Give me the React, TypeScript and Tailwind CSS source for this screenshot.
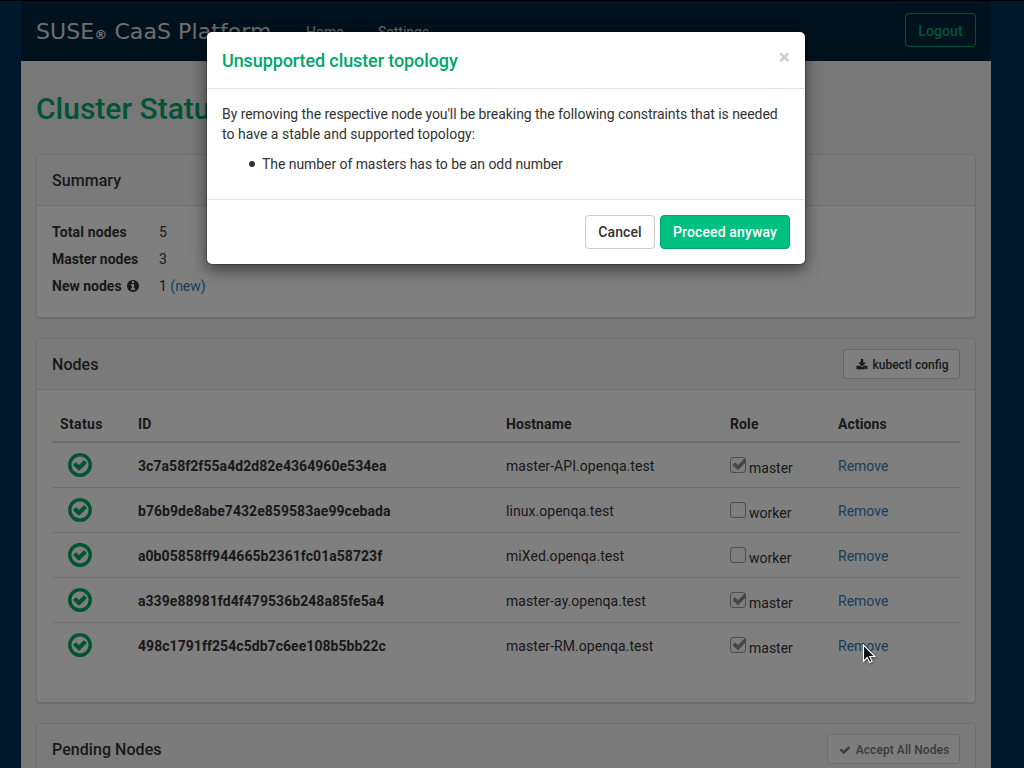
import type { ReactNode } from "react";

const CHECK_CIRCLE =
  "M1299 813l-422 422q-19 19-45 19t-45-19l-294-294q-19-19-19-45t19-45l102-102q19-19 45-19t45 19l147 147 275-275q19-19 45-19t45 19l102 102q19 19 19 45t-19 45zm141 83q0-148-73-273t-198-198-273-73-273 73-198 198-73 273 73 273 198 198 273 73 273-73 198-198 73-273zm224 0q0 209-103 385.5t-279.5 279.5-385.5 103-385.5-103-279.5-279.5-103-385.5 103-385.5 279.5-279.5 385.5-103 385.5 103 279.5 279.5 103 385.5z";
const INFO_CIRCLE =
  "M1152 1376v-160q0-14-9-23t-23-9h-96v-512q0-14-9-23t-23-9h-320q-14 0-23 9t-9 23v160q0 14 9 23t23 9h96v320h-96q-14 0-23 9t-9 23v160q0 14 9 23t23 9h448q14 0 23-9t9-23zm-128-896v-160q0-14-9-23t-23-9h-192q-14 0-23 9t-9 23v160q0 14 9 23t23 9h192q14 0 23-9t9-23zm640 416q0 209-103 385.5t-279.5 279.5-385.5 103-385.5-103-279.5-279.5-103-385.5 103-385.5 279.5-279.5 385.5-103 385.5 103 279.5 279.5 103 385.5z";
const DOWNLOAD =
  "M1344 1344q0-26-19-45t-45-19-45 19-19 45 19 45 45 19 45-19 19-45zm256 0q0-26-19-45t-45-19-45 19-19 45 19 45 45 19 45-19 19-45zm128-224v320q0 40-28 68t-68 28h-1472q-40 0-68-28t-28-68v-320q0-40 28-68t68-28h465l135 136q58 56 136 56t136-56l136-136h464q40 0 68 28t28 68zm-325-569q17 41-14 70l-448 448q-18 19-45 19t-45-19l-448-448q-31-29-14-70 17-39 59-39h256v-448q0-26 19-45t45-19h256q26 0 45 19t19 45v448h256q42 0 59 39z";
const CHECK =
  "M1671 566q0 40-28 68l-724 724-136 136q-28 28-68 28t-68-28l-136-136-362-362q-28-28-28-68t28-68l136-136q28-28 68-28t68 28l294 295 656-657q28-28 68-28t68 28l136 136q28 28 28 68z";

function Icon({ d, className }: { d: string; className: string }) {
  return (
    <svg viewBox="0 0 1792 1792" fill="currentColor" className={`shrink-0 ${className}`}>
      <path d={d} />
    </svg>
  );
}

const nodes = [
  { id: "3c7a58f2f55a4d2d82e4364960e534ea", host: "master-API.openqa.test", master: true },
  { id: "b76b9de8abe7432e859583ae99cebada", host: "linux.openqa.test", master: false },
  { id: "a0b05858ff944665b2361fc01a58723f", host: "miXed.openqa.test", master: false },
  { id: "a339e88981fd4f479536b248a85fe5a4", host: "master-ay.openqa.test", master: true },
  { id: "498c1791ff254c5db7c6ee108b5bb22c", host: "master-RM.openqa.test", master: true },
];

function Panel({ title, action, children }: { title: string; action?: ReactNode; children?: ReactNode }) {
  return (
    <section className="mb-5 rounded border border-[#ddd] bg-white shadow-[0_1px_1px_rgba(0,0,0,0.1)]">
      <header className="flex h-[51px] items-center justify-between rounded-t-[3px] border-b border-[#ddd] bg-[#f5f5f5] px-[15px]">
        <h2 className="pt-0.5 text-base font-medium tracking-[0.05px]">{title}</h2>
        {action}
      </header>
      {children}
    </section>
  );
}

function RoleBox({ checked }: { checked: boolean }) {
  return (
    <span className="mt-[-2px] flex size-4 items-center justify-center rounded-[3px] border border-[#9a9a9a] bg-[#fcfcfc]">
      {checked && (
        <svg viewBox="0 0 16 16" className="size-4 shrink-0 overflow-visible text-[#8c918f]">
          <path d="M2.4 8L5 5.2L8 8.1L15.3 0.8V5.8L8 13.2Z" fill="currentColor" />
        </svg>
      )}
    </span>
  );
}

function Summary() {
  return (
    <dl className="grid h-[111px] grid-cols-[107px_1fr] content-start px-[15px] pt-[13px] leading-[27px]">
      <dt className="font-bold tracking-[0.15px]">Total nodes</dt>
      <dd>5</dd>
      <dt className="font-bold">Master nodes</dt>
      <dd>3</dd>
      <dt className="flex items-center gap-1 font-bold">
        New nodes <Icon d={INFO_CIRCLE} className="mb-px size-3.5" />
      </dt>
      <dd>
        1 <a className="text-[#337ab7]">(new)</a>
      </dd>
    </dl>
  );
}

function NodesTable() {
  const cols = "grid grid-cols-[78px_368px_224px_108px_1fr] px-2";
  return (
    <div className="h-[312px] px-[15px] pt-[15px]">
      <div className={`${cols} h-[38px] items-center border-b-2 border-[#ddd] pt-0.5 font-bold tracking-[0.1px]`}>
        <span className="tracking-[0.35px]">Status</span>
        <span>ID</span>
        <span>Hostname</span>
        <span>Role</span>
        <span>Actions</span>
      </div>
      {nodes.map((n) => (
        <div key={n.id} className={`${cols} h-[45px] items-center border-b border-[#ddd] last:border-b-transparent`}>
          <Icon d={CHECK_CIRCLE} className="ml-1.5 size-7 text-[#00a769]" />
          <strong className="pt-px font-bold tracking-[0.05px]">{n.id}</strong>
          <span className="pt-px tracking-[0.05px]">{n.host}</span>
          <span className="flex items-center gap-[3px] pt-px">
            <RoleBox checked={n.master} />
            <span className="pt-[5px]">{n.master ? "master" : "worker"}</span>
          </span>
          <a className="pt-px text-[#337ab7]">Remove</a>
        </div>
      ))}
    </div>
  );
}

function Dialog() {
  return (
    <div
      role="dialog"
      className="absolute top-[31px] left-[206px] w-[600px] rounded-md border border-black/20 bg-white bg-clip-padding shadow-[0_5px_15px_rgba(0,0,0,0.5)]"
    >
      <div className="flex h-[57px] items-center justify-between border-b border-[#e5e5e5] px-[15px]">
        <h4 className="pt-0.5 text-lg font-medium tracking-[-0.1px] text-[#00a769]">Unsupported cluster topology</h4>
        <button className="mb-1.5 text-[21px] leading-none font-bold text-[#ccc]">×</button>
      </div>
      <div className="h-[110px] p-[15px] tracking-[-0.062px]">
        <p>
          By removing the respective node you'll be breaking the following constraints that is needed{" "}
          <span className="tracking-[0.01px]">to have a stable and supported topology:</span>
        </p>
        <ul className="mt-2.5 pl-[42px]">
          <li className="-ml-[15px] flex items-center gap-[7px]">
            <span className="size-1.5 rounded-full bg-[#333]" />
            The number of masters has to be an odd number
          </li>
        </ul>
      </div>
      <div className="flex h-[65px] justify-end gap-[5px] border-t border-[#e5e5e5] p-[15px]">
        <button className="h-[34px] w-[70px] rounded border border-[#ccc] bg-white font-medium tracking-[0.1px]">
          Cancel
        </button>
        <button className="h-[34px] w-[130px] rounded border border-[#00a769] bg-[#00c081] font-medium tracking-[0.12px] text-white">
          Proceed anyway
        </button>
      </div>
    </div>
  );
}

function Cursor() {
  return (
    <svg
      viewBox="0 0 13 20"
      className="absolute top-[644px] left-[863px] h-5 w-[13px] overflow-visible drop-shadow-[1px_1px_1px_rgba(0,0,0,0.4)]"
    >
      <path d="M.5 1V17.2L4.2 13.5L6.7 18.5L9.1 17.3L6.7 12.5H11.8Z" fill="#111" stroke="#fff" strokeWidth="1.1" />
    </svg>
  );
}

export default function App() {
  return (
    <div className="relative h-[768px] w-[1024px] overflow-hidden bg-[#003159] font-['Roboto',sans-serif] text-sm leading-5 text-[#333]">
      <div className="mr-[33px] ml-[21px] h-full bg-[#f0f0f0] pt-px">
        <nav className="flex h-[60px] items-center bg-[#00243d] px-[15px] text-[#ddd]">
          <div className="w-[270px] pt-[3px] font-['DejaVu_Sans',sans-serif] text-[22px] leading-[57px] tracking-[0.08px] whitespace-nowrap">
            SUSE<span className="text-[13px] font-bold">®</span> CaaS Platform
          </div>
          <span className="w-[72px] pt-0.5">Home</span>
          <span className="pt-0.5">Settings</span>
          <button className="ml-auto h-[34px] w-[71px] -translate-y-px rounded border border-[#00a769] pt-0.5 font-medium tracking-[0.1px] text-[#00a769]">
            Logout
          </button>
        </nav>
        <main className="px-[15px]">
          <h1 className="pt-[30px] pb-[27px] text-[30px] leading-9 font-medium text-[#00a769]">Cluster Status</h1>
          <Panel title="Summary">
            <Summary />
          </Panel>
          <Panel
            title="Nodes"
            action={
              <button className="flex h-[30px] w-[117px] items-center justify-center gap-[5px] rounded-[3px] border border-[#ccc] bg-white pl-px text-xs font-medium">
                <Icon d={DOWNLOAD} className="mt-0.5 size-3" />
                <span className="pt-0.5">kubectl config</span>
              </button>
            }
          >
            <NodesTable />
          </Panel>
          <Panel
            title="Pending Nodes"
            action={
              <button className="flex h-[30px] w-[133px] items-center justify-center gap-[5px] rounded-[3px] border border-[#d8d8d8] bg-[#fafafa] pl-px text-xs font-medium tracking-[0.07px] text-[#777]">
                <Icon d={CHECK} className="mt-px size-3" />
                <span className="pt-0.5">Accept All Nodes</span>
              </button>
            }
          >
            <div className="h-24" />
          </Panel>
        </main>
      </div>
      <div className="absolute inset-0 border-t border-black bg-black/50" />
      <Dialog />
      <Cursor />
    </div>
  );
}
